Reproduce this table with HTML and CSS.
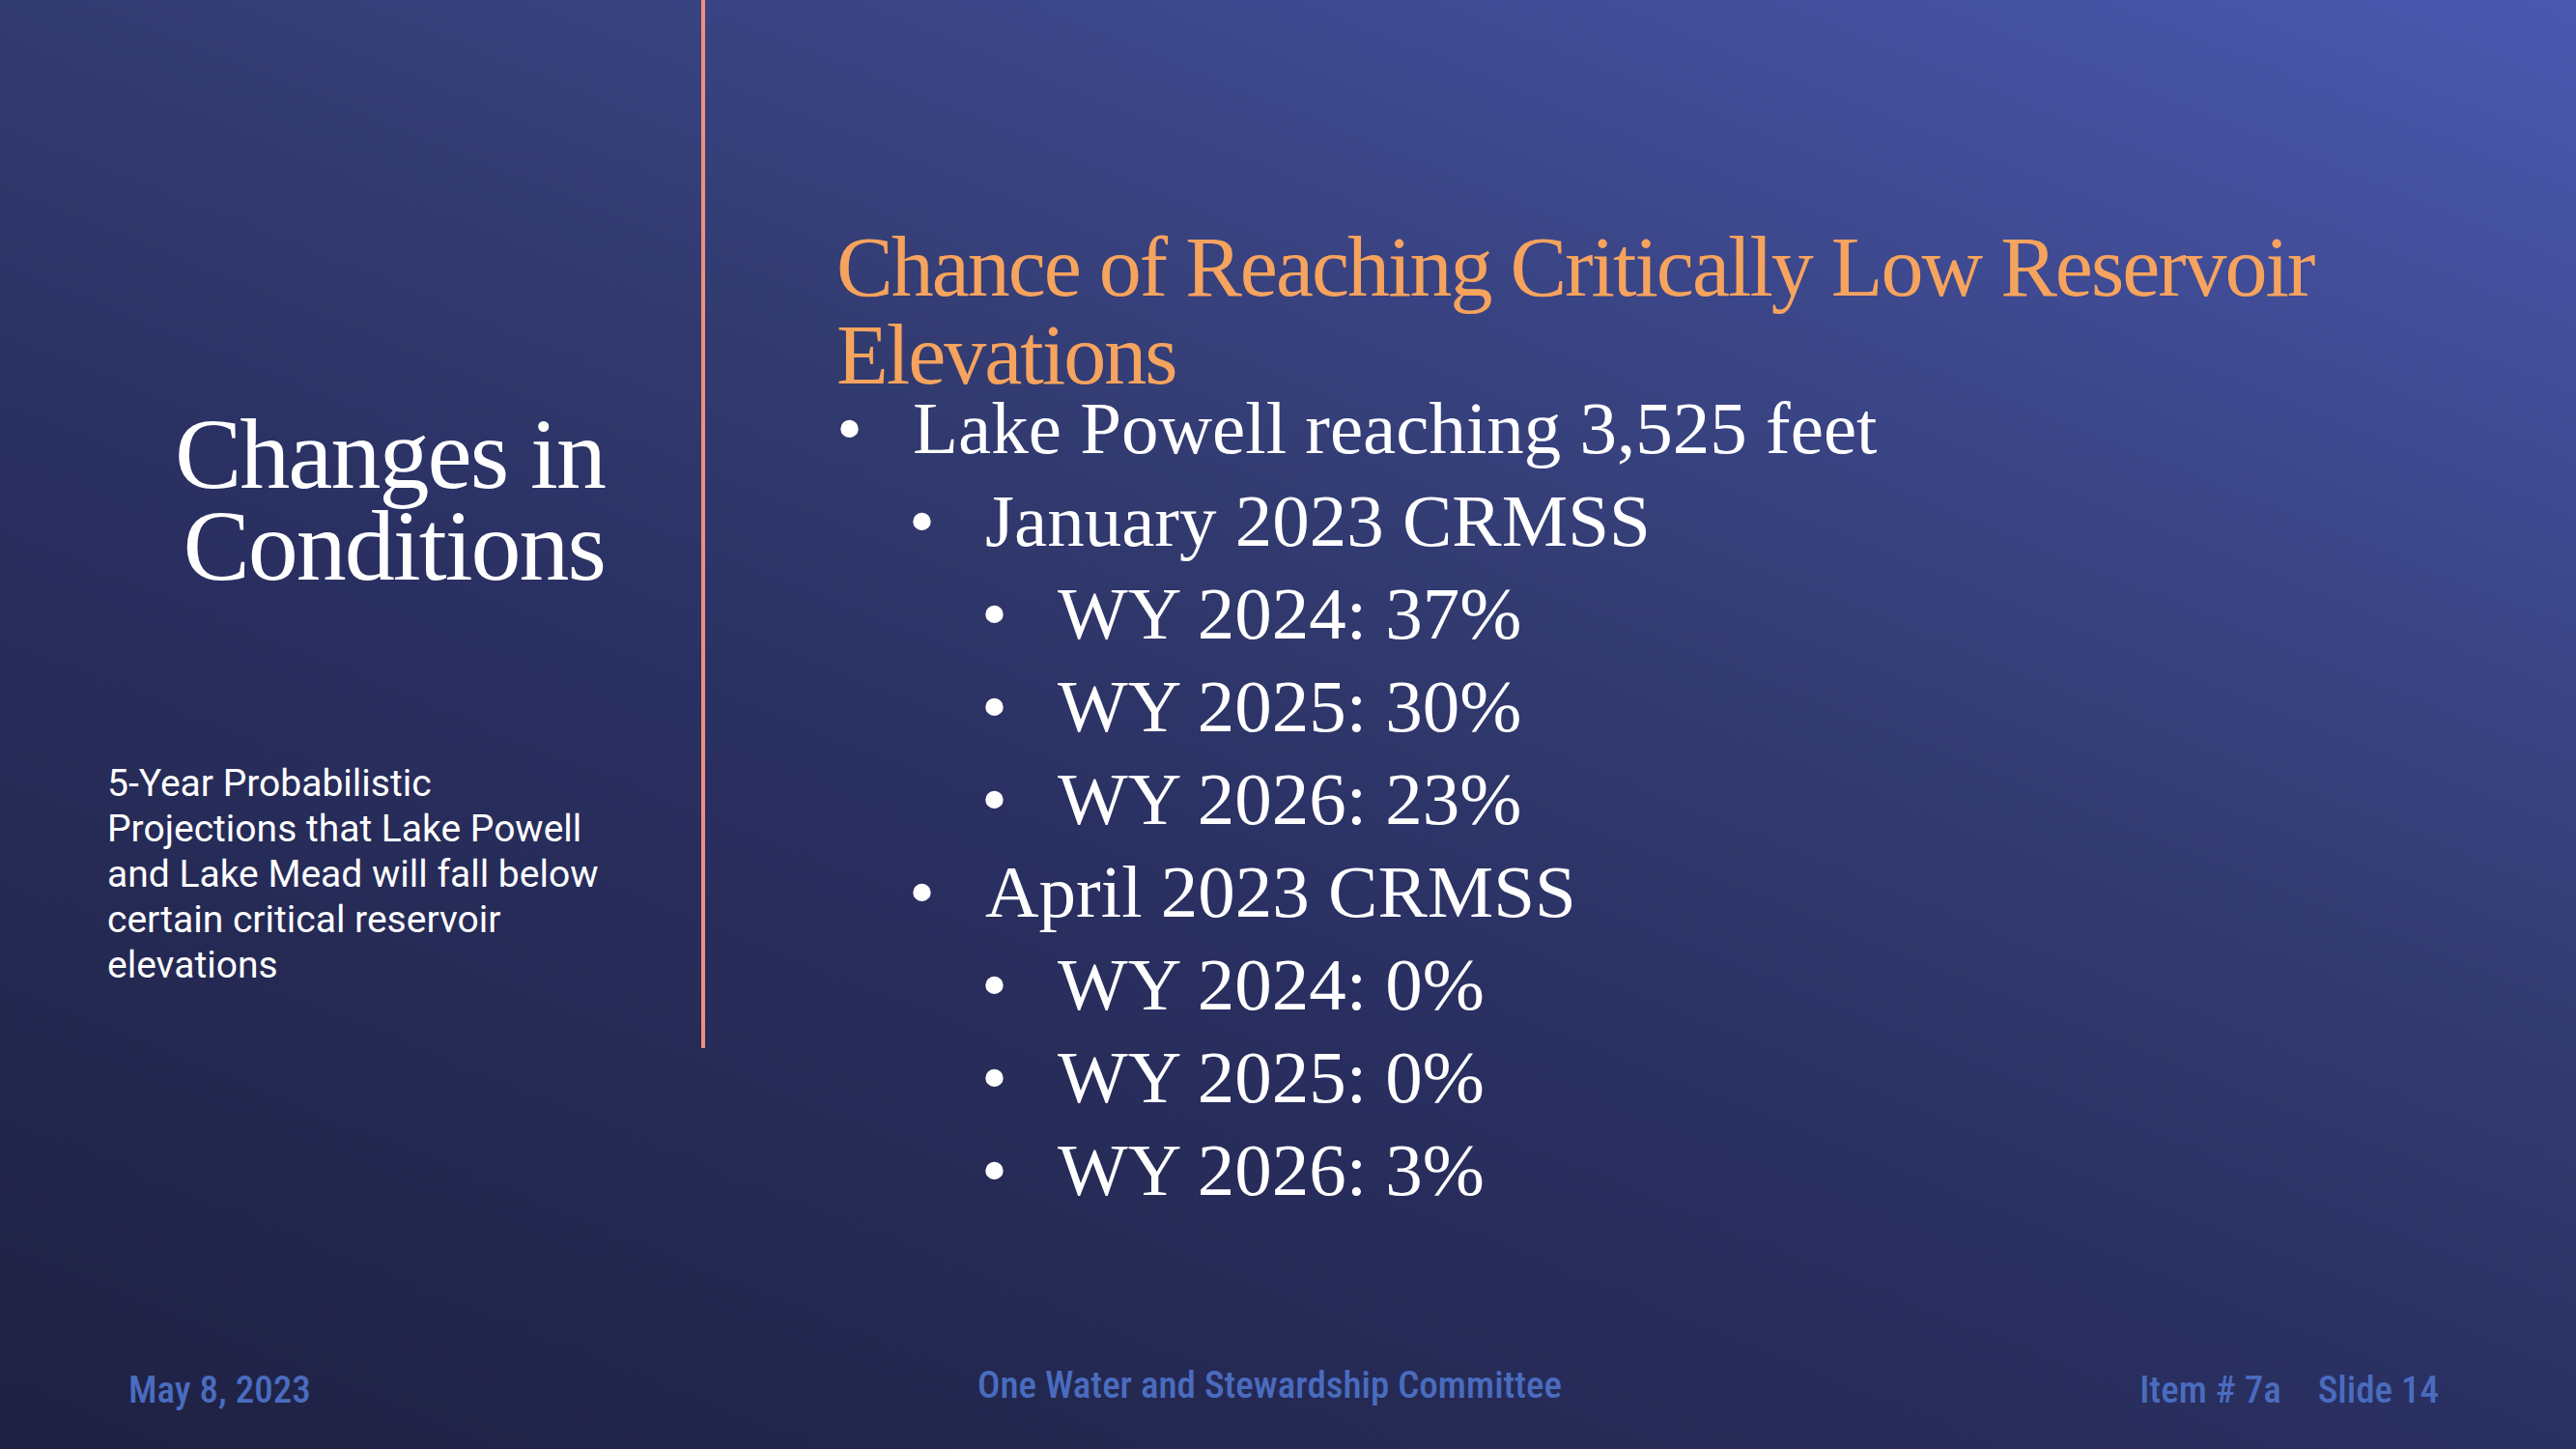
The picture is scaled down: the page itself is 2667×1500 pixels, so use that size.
FILE: index.html
```html
<!DOCTYPE html>
<html lang="en">
<head>
<meta charset="utf-8">
<title>Changes in Conditions</title>
<link rel="stylesheet" href="styles.css">
</head>
<body>
<div class="slide">
  <div class="main">
    <aside class="side">
      <h1 class="side-title">Changes in<br>Conditions</h1>
      <p class="side-text">5-Year Probabilistic<br>Projections that Lake Powell<br>and Lake Mead will fall below<br>certain critical reservoir<br>elevations</p>
    </aside>
    <section class="content">
      <h2 class="title">Chance of Reaching Critically Low Reservoir Elevations</h2>
      <ul class="items">
        <li>Lake Powell reaching 3,525 feet
          <ul class="items">
            <li>January 2023 CRMSS
              <ul class="items">
                <li>WY 2024: 37%</li>
                <li>WY 2025: 30%</li>
                <li>WY 2026: 23%</li>
              </ul>
            </li>
            <li>April 2023 CRMSS
              <ul class="items">
                <li>WY 2024: 0%</li>
                <li>WY 2025: 0%</li>
                <li>WY 2026: 3%</li>
              </ul>
            </li>
          </ul>
        </li>
      </ul>
    </section>
  </div>
  <footer class="footer">
    <span class="foot-date">May 8, 2023</span>
    <span class="foot-center">One Water and Stewardship Committee</span>
    <span class="foot-right"><span>Item # 7a</span><span>Slide 14</span></span>
  </footer>
</div>
</body>
</html>
```
FILE: styles.css
```css
html, body {
  margin: 0;
  padding: 0;
}
body {
  width: 2667px;
  height: 1500px;
  overflow: hidden;
  background: linear-gradient(22deg, #1e2142 0%, #2a3062 42%, #323b70 58%, #4a58b0 100%);
  font-family: "Liberation Serif", "DejaVu Serif", serif;
  color: #ffffff;
}
.slide {
  display: flex;
  flex-direction: column;
  height: 1500px;
}
.main {
  flex: 1;
  display: flex;
  align-items: flex-start;
}
.side {
  width: 726px;
  height: 1085px;
  border-right: 4px solid #ef8f7c;
  flex-shrink: 0;
}
.side-title {
  margin: 0;
  padding: 422px 100px 0 0;
  text-align: right;
  font-weight: 400;
  font-size: 104px;
  line-height: 95px;
  letter-spacing: -2px;
}
.side-text {
  margin: 176px 0 0 0;
  padding-left: 111px;
  font-family: Roboto, "Liberation Sans", sans-serif;
  font-size: 39px;
  line-height: 47px;
}
.content {
  padding: 231px 0 0 136px;
}
.title {
  margin: 0;
  width: 1700px;
  font-weight: 400;
  font-size: 88px;
  line-height: 91px;
  letter-spacing: -2px;
  color: #f6a35e;
}
.items {
  list-style: none;
  margin: 0;
  padding: 0;
  font-size: 77px;
  line-height: 96px;
}
.content > .items {
  margin-top: -18px;
}
.items .items {
  padding-left: 75px;
}
.items li::before {
  content: "\2022";
  display: inline-block;
  width: 79px;
}
.footer {
  height: 85px;
  display: grid;
  grid-template-columns: 879px 1fr auto;
  align-items: start;
  padding: 0 142px 0 133px;
  font-family: "Roboto Condensed", "Liberation Sans Narrow", Roboto, sans-serif;
  font-weight: 500;
  font-size: 39px;
  line-height: 48px;
  color: #4a6cbf;
}
.foot-center {
  margin-top: -5px;
}
.foot-right {
  display: flex;
  gap: 38px;
}
```
